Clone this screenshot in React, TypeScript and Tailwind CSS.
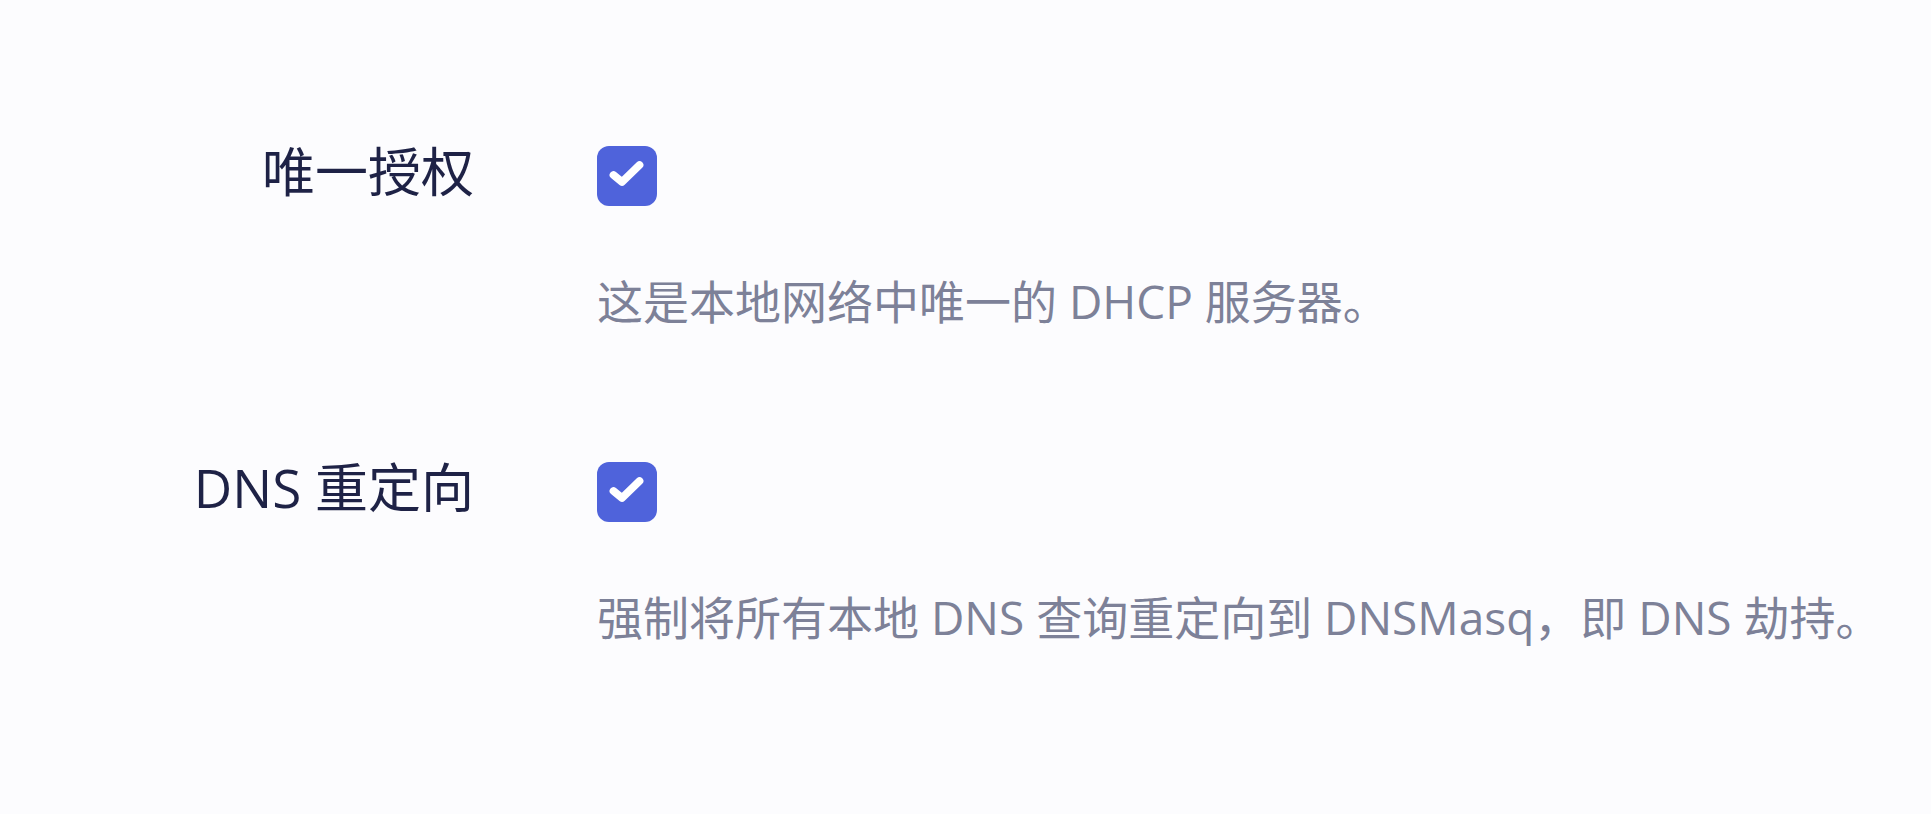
import React from "react";

interface OptionRowProps {
  label: string;
  description: string;
  checked: boolean;
}

function CheckBox({ checked }: { checked: boolean }) {
  return (
    <div
      className={`flex h-[60px] w-[60px] items-center justify-center rounded-[12px] ${
        checked ? "bg-[#4f63db]" : "border-2 border-[#c9cbd6] bg-white"
      }`}
    >
      {checked && (
        <svg viewBox="0 0 24 24" className="h-[60px] w-[60px]" fill="none">
          <polyline
            points="6.6,11.6 10,14.4 17,7.6"
            stroke="#ffffff"
            strokeWidth="3.1"
            strokeLinecap="round"
            strokeLinejoin="round"
          />
        </svg>
      )}
    </div>
  );
}

function OptionRow({ label, description, checked }: OptionRowProps) {
  return (
    <div className="grid grid-cols-[474px_1fr] gap-x-[123px]">
      <div className="text-right text-[53px] leading-[52px] text-[#1e2246]">{label}</div>
      <div>
        <CheckBox checked={checked} />
        <p className="mt-[61px] text-[46px] leading-[69px] text-[#7d8198]">{description}</p>
      </div>
    </div>
  );
}

export default function App() {
  return (
    <div className="min-h-screen bg-[#fcfcfe] font-['Open_Sans','Noto_Sans_CJK_SC',sans-serif]">
      <div className="flex flex-col gap-y-[126px] pt-[146px]">
        <OptionRow label="唯一授权" description="这是本地网络中唯一的 DHCP 服务器。" checked />
        <OptionRow
          label="DNS 重定向"
          description="强制将所有本地 DNS 查询重定向到 DNSMasq，即 DNS 劫持。"
          checked
        />
      </div>
    </div>
  );
}
